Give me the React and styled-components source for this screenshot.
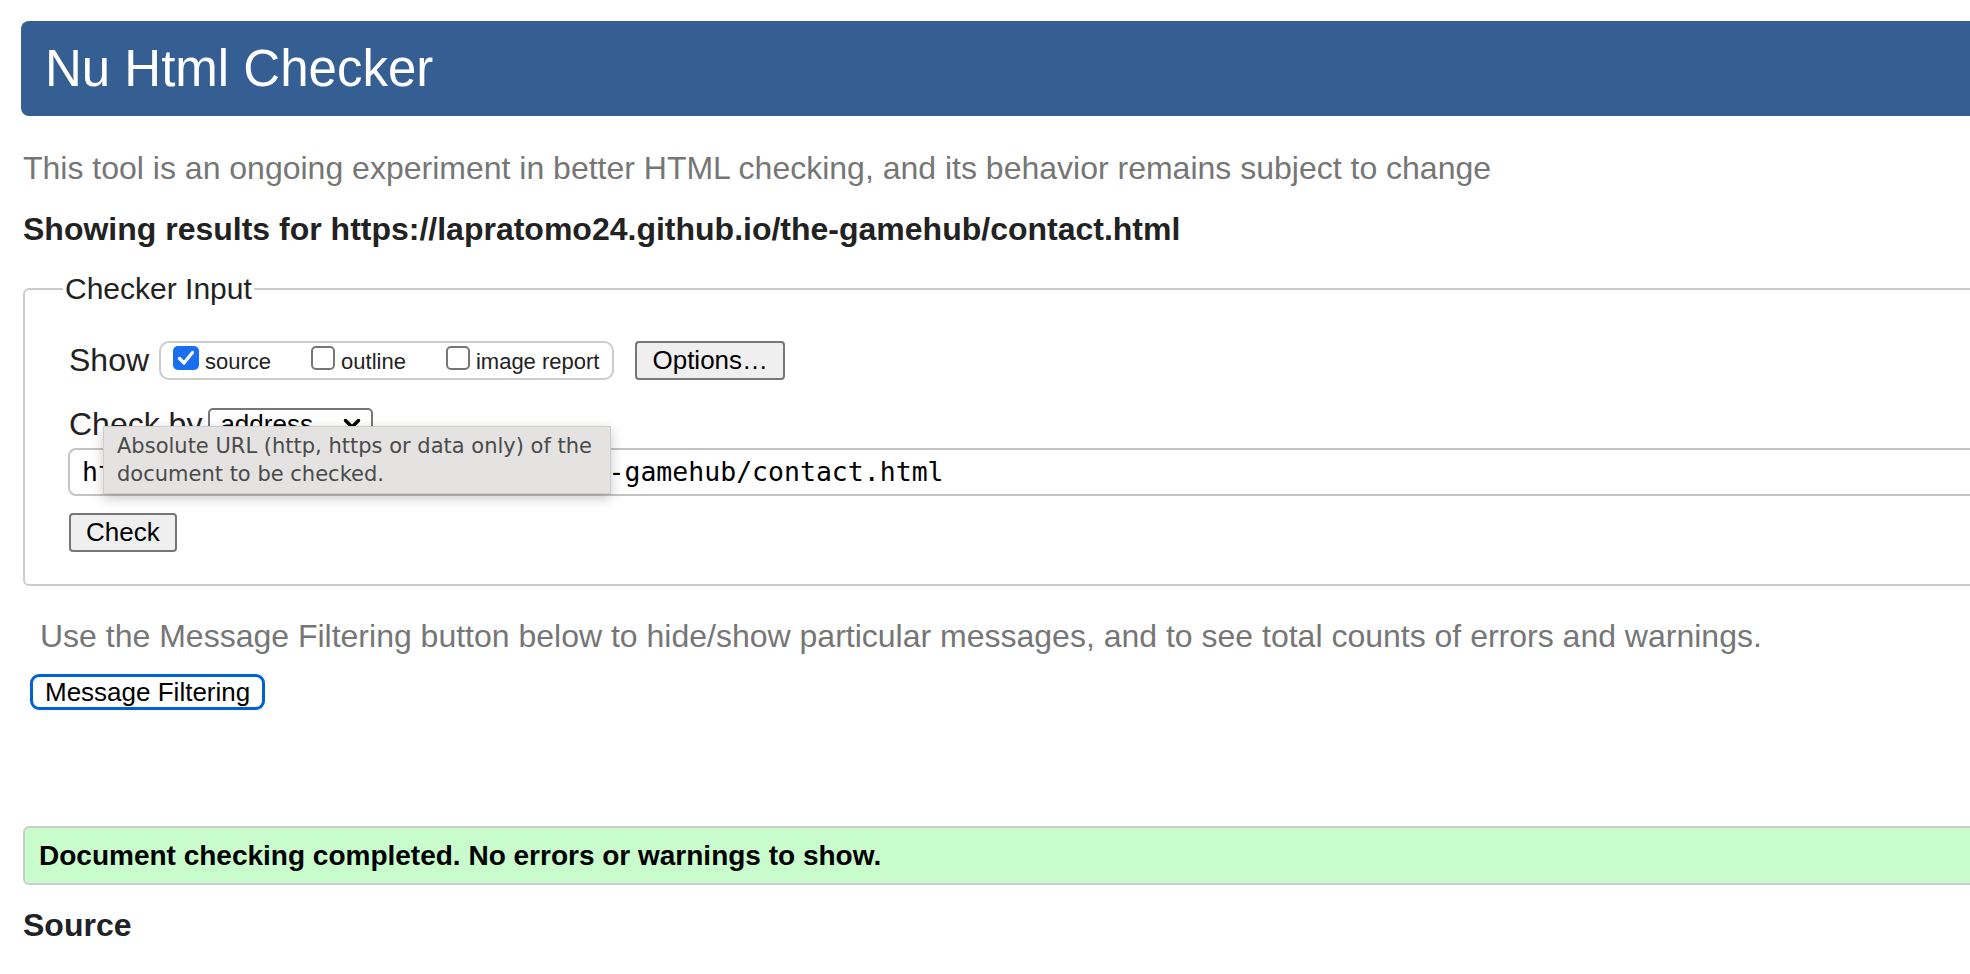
import React from 'react';
import styled, { createGlobalStyle } from 'styled-components';

const GlobalStyle = createGlobalStyle`
  html, body {
    margin: 0;
    padding: 0;
    background: #fff;
    overflow: hidden;
  }
  body {
    font-family: "Liberation Sans", Arial, Helvetica, sans-serif;
    color: #222;
  }
`;

const Page = styled.div`
  width: 2100px;
  padding: 21px 0 0 23px;
  box-sizing: border-box;
`;

const Header = styled.h1`
  margin: 0 0 0 -2px;
  height: 95px;
  padding-left: 24px;
  background: #355e93;
  border-radius: 8px 0 0 8px;
  color: #fff;
  font-size: 51px;
  font-weight: normal;
  line-height: 95px;
`;

const Intro = styled.p`
  margin: 32px 0 0;
  font-size: 32px;
  line-height: 40px;
  color: #767676;
`;

const Results = styled.p`
  margin: 21px 0 0;
  font-size: 32px;
  line-height: 40px;
  font-weight: bold;
  color: #222;
`;

const Fieldset = styled.fieldset`
  margin: 22px 0 0;
  padding: 0 0 32px 44px;
  border: 2px solid #ccc;
  border-radius: 6px;
  min-width: 0;
`;

const Legend = styled.legend`
  margin-left: -6px;
  padding: 0 2px;
  font-size: 30px;
  line-height: 36px;
  color: #222;
`;

const Row = styled.div`
  display: flex;
  align-items: center;
  gap: ${(p) => p.$gap || 0}px;
  margin-top: ${(p) => p.$top || 0}px;
`;

const Label = styled.span`
  font-size: 32px;
  line-height: 40px;
  color: #222;
  margin-right: ${(p) => p.$after || 0}px;
`;

const CheckGroup = styled.div`
  display: flex;
  align-items: center;
  gap: 40px;
  height: 39px;
  box-sizing: border-box;
  padding: 0 13px 0 12px;
  border: 2px solid #ccc;
  border-radius: 10px;
  margin-right: 21px;
`;

const CheckItem = styled.label`
  display: flex;
  align-items: center;
  gap: 6px;
  padding-top: 3px;
  font-size: 22px;
  color: #222;
`;

const Box = styled.span`
  display: inline-flex;
  align-items: center;
  justify-content: center;
  width: ${(p) => (p.$checked ? 26 : 24)}px;
  height: 24px;
  box-sizing: border-box;
  margin-bottom: 8px;
  border-radius: 5px;
  background: ${(p) => (p.$checked ? '#1a6ff0' : '#fff')};
  border: ${(p) => (p.$checked ? 'none' : '2px solid #767676')};
`;

const Button = styled.button`
  height: 39px;
  padding: 0 15px;
  font-family: inherit;
  font-size: 26px;
  color: #000;
  background: #efefef;
  border: 2px solid #767676;
  border-radius: 4px;
`;

const Select = styled.div`
  display: flex;
  align-items: center;
  justify-content: space-between;
  width: 165px;
  height: 32px;
  box-sizing: border-box;
  padding: 0 10px 0 10px;
  border: 2px solid #767676;
  border-radius: 5px;
  font-size: 26px;
  color: #000;
`;

const UrlWrap = styled.div`
  position: relative;
  margin: 4px 0 0 -1px;
`;

const UrlInput = styled.div`
  height: 48px;
  box-sizing: border-box;
  padding-left: 12px;
  border: 2px solid #c4c4c4;
  border-radius: 8px;
  font-family: "DejaVu Sans Mono", "Liberation Mono", monospace;
  font-size: 26.5px;
  line-height: 44px;
  color: #000;
  white-space: nowrap;
`;

const Tooltip = styled.div`
  position: absolute;
  top: -22px;
  left: 35px;
  width: 508px;
  height: 68px;
  box-sizing: border-box;
  padding: 5px 13px 0;
  background: #e4e3e1;
  border: 1px solid #cfcdca;
  box-shadow: 0 4px 12px rgba(0, 0, 0, 0.22);
  font-family: "DejaVu Sans", "Noto Sans", sans-serif;
  font-size: 21px;
  line-height: 28px;
  color: #4a4a4a;
`;

const CheckButton = styled(Button)`
  display: block;
  margin-top: 17px;
`;

const FilterNote = styled.p`
  margin: 30px 0 0;
  padding-left: 17px;
  font-size: 32px;
  line-height: 40px;
  color: #767676;
`;

const FilterButton = styled.button`
  display: block;
  height: 36px;
  margin: 18px 0 0 7px;
  padding: 0 12px;
  font-family: inherit;
  font-size: 26px;
  color: #000;
  background: #fff;
  border: 3px solid #0062d3;
  border-radius: 9px;
`;

const Success = styled.div`
  margin-top: 116px;
  height: 59px;
  box-sizing: border-box;
  padding-left: 14px;
  background: #c8fccc;
  border: 2px solid #ccc;
  border-radius: 6px 0 0 6px;
  font-size: 28px;
  font-weight: bold;
  line-height: 55px;
  color: #000;
`;

const SourceTitle = styled.h2`
  margin: 20px 0 0;
  font-size: 32px;
  line-height: 40px;
  font-weight: bold;
  color: #1f2328;
`;

const Tick = () => (
  <svg width="18" height="16" viewBox="0 0 18 16">
    <path d="M2.5 8.5 L7 13 L15.5 2.5" fill="none" stroke="#fff" strokeWidth="3.2" strokeLinecap="round" strokeLinejoin="round" />
  </svg>
);

const Chevron = () => (
  <svg width="18" height="12" viewBox="0 0 18 12">
    <path d="M2.5 2.5 L9 9 L15.5 2.5" fill="none" stroke="#000" strokeWidth="3.4" strokeLinecap="round" strokeLinejoin="round" />
  </svg>
);

const options = [
  { id: 'source', label: 'source', checked: true },
  { id: 'outline', label: 'outline', checked: false },
  { id: 'image', label: 'image report', checked: false },
];

const App = () => {
  return (
    <Page>
      <GlobalStyle />
      <Header>Nu Html Checker</Header>
      <Intro>
        This tool is an ongoing experiment in better HTML checking, and its behavior remains subject to change
      </Intro>
      <Results>Showing results for https://lapratomo24.github.io/the-gamehub/contact.html</Results>

      <Fieldset>
        <Legend>Checker Input</Legend>
        <Row $top={33}>
          <Label $after={10}>Show</Label>
          <CheckGroup>
            {options.map(({ id, label, checked }) => (
              <CheckItem key={id}>
                <Box $checked={checked}>{checked && <Tick />}</Box>
                {label}
              </CheckItem>
            ))}
          </CheckGroup>
          <Button>Options…</Button>
        </Row>
        <Row $top={24} $gap={6}>
          <Label>Check by</Label>
          <Select>
            <span>address</span>
            <Chevron />
          </Select>
        </Row>
        <UrlWrap>
          <UrlInput>https://lapratomo24.github.io/the-gamehub/contact.html</UrlInput>
          <Tooltip>
            Absolute URL (http, https or data only) of the
            <br />
            document to be checked.
          </Tooltip>
        </UrlWrap>
        <CheckButton>Check</CheckButton>
      </Fieldset>

      <FilterNote>
        Use the Message Filtering button below to hide/show particular messages, and to see total counts of errors and warnings.
      </FilterNote>
      <FilterButton>Message Filtering</FilterButton>

      <Success>Document checking completed. No errors or warnings to show.</Success>
      <SourceTitle>Source</SourceTitle>
    </Page>
  );
};

export default App;
